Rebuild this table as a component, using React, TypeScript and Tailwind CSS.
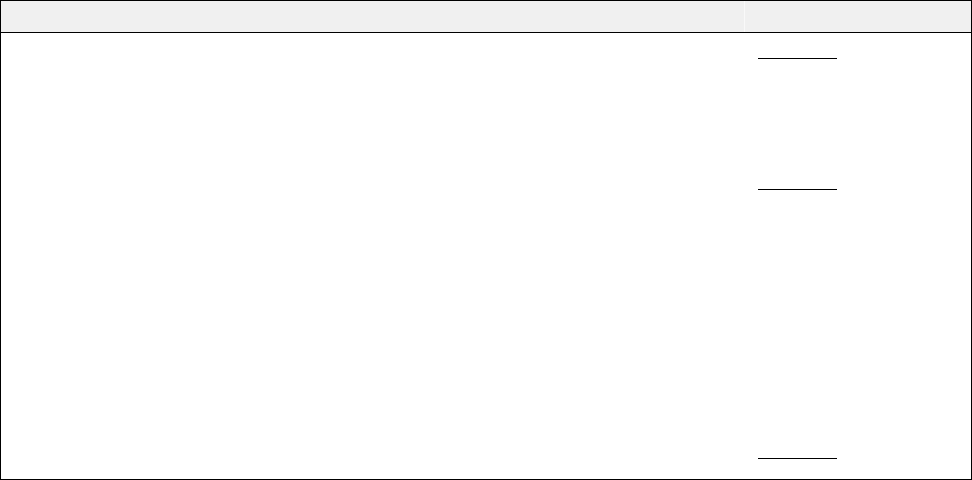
export default function App() {
  return (
    <div className="w-[972px] h-[480px] bg-white border border-black flex flex-col">
      {/* Header row */}
      <div className="h-[32px] flex border-b border-black bg-[#f0f0f0] shrink-0">
        <div className="w-[743px]" />
        <div className="w-px bg-[#f9f9f9]" />
        <div className="flex-1" />
      </div>

      {/* Body */}
      <div className="flex-1 flex">
        <div className="w-[744px]" />
        <div className="flex-1 flex flex-col pl-[13px] pt-[25px] pb-[20px]">
          <div className="w-[79px] h-px bg-black" />
          <div className="w-[79px] h-px bg-black mt-[130px]" />
          <div className="flex-1" />
          <div className="w-[79px] h-px bg-black" />
        </div>
      </div>
    </div>
  );
}
